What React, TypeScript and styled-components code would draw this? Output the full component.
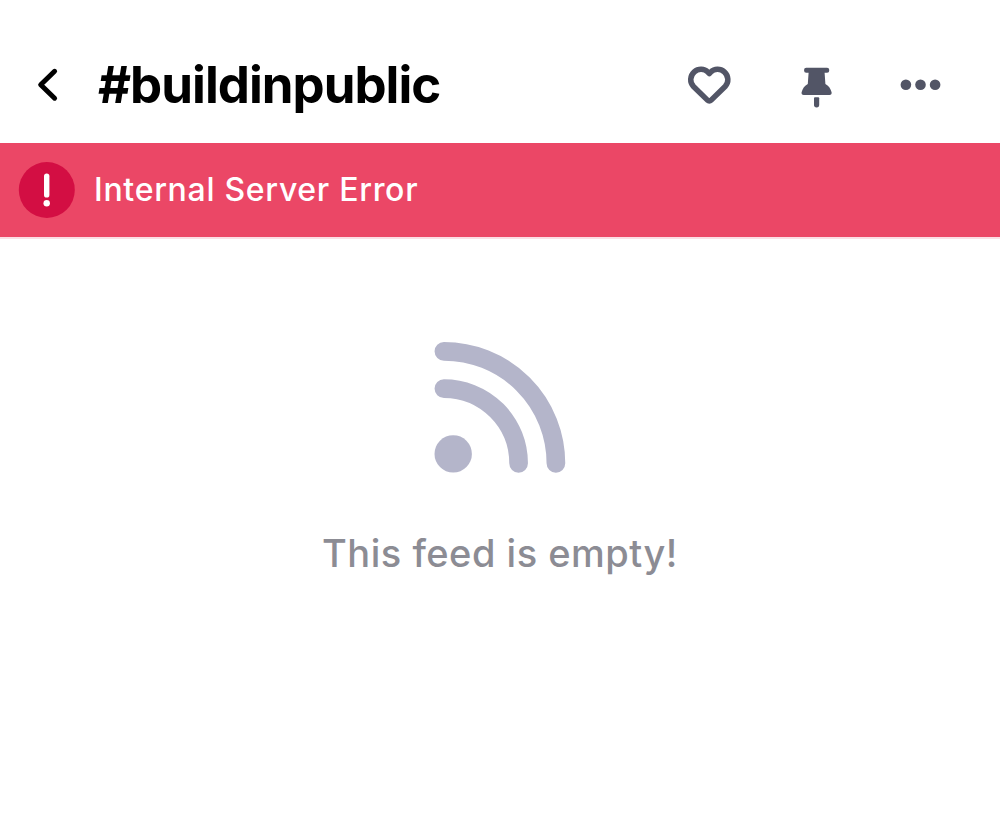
import styled, { createGlobalStyle } from 'styled-components';

const colors = {
  text: '#000000',
  icon: '#525566',
  banner: '#eb4766',
  bannerEdge: '#fbdfe5',
  danger: '#d30e43',
  feed: '#b4b5ca',
  muted: '#8c8c94',
};

export default function App() {
  return (
    <>
      <GlobalStyle />
      <Screen>
        <Header>
          <BackButton aria-label="Back">
            <ChevronIcon />
          </BackButton>
          <Title>#buildinpublic</Title>
          <Actions>
            <IconButton aria-label="Favorite">
              <HeartIcon />
            </IconButton>
            <IconButton aria-label="Pin">
              <PinIcon />
            </IconButton>
            <IconButton aria-label="More">
              <MoreIcon />
            </IconButton>
          </Actions>
        </Header>

        <Banner role="alert">
          <AlertIcon />
          <BannerText>Internal Server Error</BannerText>
        </Banner>

        <EmptyState>
          <FeedIcon />
          <EmptyText>This feed is empty!</EmptyText>
        </EmptyState>
      </Screen>
    </>
  );
}

function ChevronIcon() {
  return (
    <svg width="24" height="36" viewBox="0 0 24 36" fill="none">
      <path
        d="M18.6 4.3 4.7 17.8l13.9 13.4"
        stroke={colors.text}
        strokeWidth="5"
        strokeLinecap="round"
        strokeLinejoin="round"
      />
    </svg>
  );
}

function HeartIcon() {
  return (
    <svg width="44" height="44" viewBox="0 0 44 44" fill="none">
      <path
        d="M22.3 10.6 20.9 9.1C17.3 5.6 11.3 5.3 7.3 8.9C2.8 12.9 2.6 19.4 6.5 23.5L20.7 37.4C21.6 38.3 23 38.3 23.9 37.4L38.1 23.5C42 19.4 41.8 12.9 37.3 8.9C33.3 5.3 27.3 5.6 23.7 9.1Z"
        stroke={colors.icon}
        strokeWidth="5.5"
        strokeLinejoin="round"
      />
    </svg>
  );
}

function PinIcon() {
  return (
    <svg width="44" height="44" viewBox="-1.5 0 44 44" fill={colors.icon}>
      <path d="M11.7 4.7H32.6A2.1 2.1 0 0 1 34.7 6.8V7.7A2.1 2.1 0 0 1 32.6 9.8H30.1L30.9 20.9C34 22.5 36.2 25.4 37.1 29.2C37.5 30.7 36.5 32 35 32H9.2C7.7 32 6.7 30.7 7.1 29.2C8 25.4 10.2 22.5 13.3 20.9L14.1 9.8H11.7A2.1 2.1 0 0 1 9.6 7.7V6.8A2.1 2.1 0 0 1 11.7 4.7Z" />
      <path d="M19.5 35.3A1 1 0 0 1 20.5 34.3H23.7A1 1 0 0 1 24.7 35.3V41.8A2.6 2.6 0 0 1 19.5 41.8Z" />
    </svg>
  );
}

function MoreIcon() {
  return (
    <svg width="44" height="44" viewBox="0 0 44 44" fill={colors.icon}>
      <circle cx="6.9" cy="21.8" r="5.3" />
      <circle cx="21.5" cy="21.8" r="5.3" />
      <circle cx="36.1" cy="21.8" r="5.3" />
    </svg>
  );
}

function AlertIcon() {
  return (
    <svg width="56" height="56" viewBox="0 0 56 56">
      <circle cx="27.8" cy="28" r="28" fill={colors.danger} />
      <rect x="25" y="11.6" width="5.4" height="24" rx="2.7" fill="#fff" />
      <circle cx="27.7" cy="41.3" r="3.2" fill="#fff" />
    </svg>
  );
}

function FeedIcon() {
  return (
    <svg width="132" height="132" viewBox="0 0 132 132" fill="none">
      <circle cx="19.2" cy="111.9" r="18.7" fill={colors.feed} />
      <path
        d="M9.9 46.6A74.7 74.7 0 0 1 84.6 121.3M9.9 9.3A112 112 0 0 1 121.9 121.3"
        stroke={colors.feed}
        strokeWidth="18.7"
        strokeLinecap="round"
      />
    </svg>
  );
}

const GlobalStyle = createGlobalStyle`
  body {
    margin: 0;
    background: #fff;
    font-family: Inter, 'Liberation Sans', sans-serif;
  }

  svg {
    display: block;
    flex-shrink: 0;
    overflow: visible;
  }
`;

const Screen = styled.div`
  min-height: 834px;
  background: #fff;
`;

const Header = styled.header`
  display: flex;
  align-items: center;
  height: 143px;
  box-sizing: border-box;
  padding: 27px 57px 0 36px;
`;

const BackButton = styled.button`
  display: flex;
  padding: 0;
  border: none;
  background: none;
`;

const Title = styled.h1`
  margin: 0 0 0 38px;
  color: ${colors.text};
  font-size: 51px;
  font-weight: 700;
  line-height: 60px;
  letter-spacing: -0.98px;
  white-space: nowrap;
`;

const Actions = styled.div`
  display: flex;
  gap: 62px;
  margin-left: auto;
`;

const IconButton = styled.button`
  display: flex;
  padding: 0;
  border: none;
  background: none;
`;

const Banner = styled.div`
  display: flex;
  align-items: center;
  gap: 19px;
  height: 94px;
  padding: 0 19px;
  background: ${colors.banner};
  border-bottom: 2px solid ${colors.bannerEdge};
`;

const BannerText = styled.span`
  color: #fff;
  font-size: 32px;
  font-weight: 500;
  line-height: 40px;
  letter-spacing: 0.7px;
  white-space: nowrap;
`;

const EmptyState = styled.main`
  display: flex;
  flex-direction: column;
  align-items: center;
  padding-top: 103px;
`;

const EmptyText = styled.p`
  margin: 55px 0 0;
  color: ${colors.muted};
  font-size: 38px;
  font-weight: 500;
  line-height: 48px;
  letter-spacing: 0.5px;
  white-space: nowrap;
`;
